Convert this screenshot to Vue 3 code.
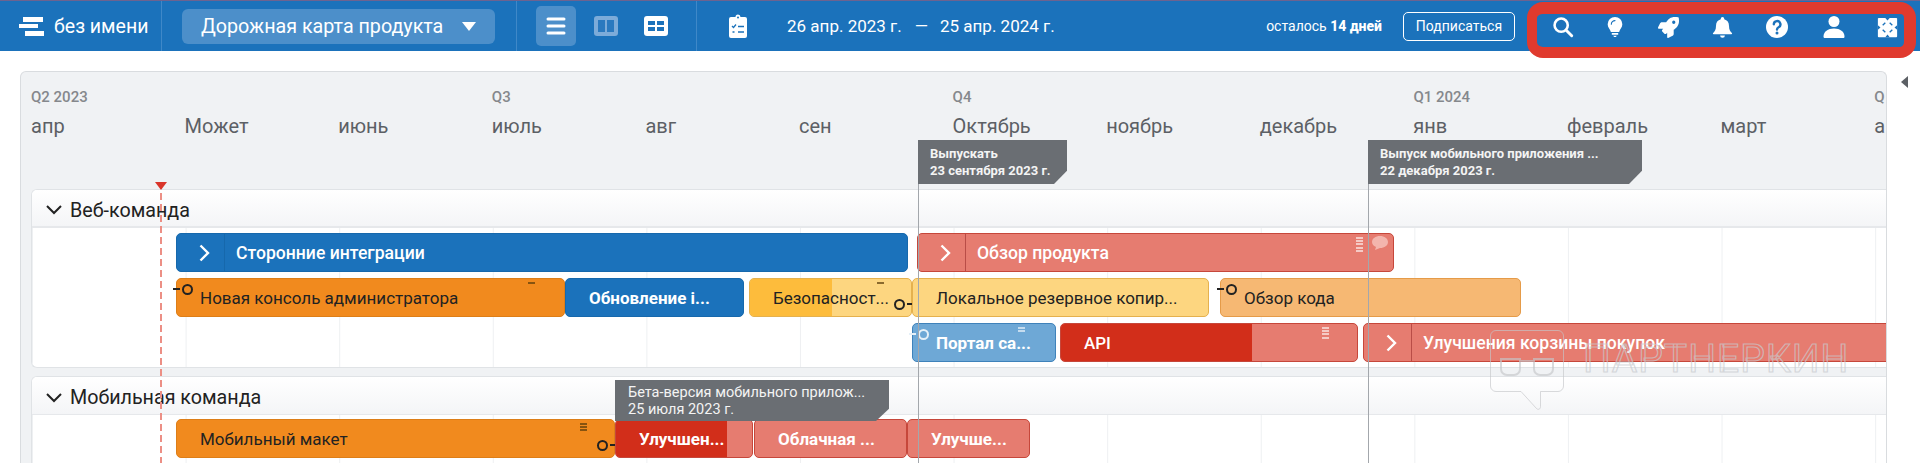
<script setup>
const months = ["апр", "Может", "июнь", "июль", "авг", "сен", "Октябрь", "ноябрь", "декабрь", "янв", "февраль", "март", "а"];
const quarters = ["Q2 2023", "Q3", "Q4", "Q1 2024", "Q"];

// bar positions are in px from the left edge of a lane
const origin = 32;
const bar = (title, kind, from, to, extra = {}) => ({ title, kind, left: from - origin, width: to - from, ...extra });

const webRows = [
  [
    bar("Сторонние интеграции", "blue", 176, 908, { parent: true }),
    bar("Обзор продукта", "salmon", 917, 1394, { parent: true, grip: { x: 438, lines: 5 }, comment: true }),
  ],
  [
    bar("Новая консоль администратора", "orange", 176, 565, { link: "start", grip: { x: 351, lines: 1 } }),
    bar("Обновление i...", "blue", 565, 744, { bold: true }),
    bar("Безопасност...", "yellow", 749, 912, { fill: 82, link: "end", grip: { x: 127, lines: 1 } }),
    bar("Локальное резервное копир...", "yellow", 912, 1209),
    bar("Обзор кода", "peach", 1220, 1521, { link: "start" }),
  ],
  [
    bar("Портал са...", "sky", 912, 1056, { link: "start", grip: { x: 105, lines: 2 }, bold: true }),
    bar("API", "salmon", 1060, 1358, { fill: 191, grip: { x: 261, lines: 4 } }),
    bar("Улучшения корзины покупок", "salmon", 1363, 1950, { parent: true }),
  ],
];

const mobileRows = [
  [
    bar("Мобильный макет", "orange", 176, 615, { link: "end", grip: { x: 403, lines: 3 } }),
    bar("Улучшен...", "salmon", 615, 753, { fill: 111, bold: true }),
    bar("Облачная ...", "salmon", 754, 907, { bold: true }),
    bar("Улучше...", "salmon", 907, 1030, { bold: true }),
  ],
];

const lanes = [
  { name: "Веб-команда", rows: webRows },
  { name: "Мобильная команда", rows: mobileRows },
];

const flags = [
  { title: "Выпускать", date: "23 сентября 2023 г.", left: 897, top: 68, width: 149 },
  { title: "Выпуск мобильного приложения ...", date: "22 декабря 2023 г.", left: 1347, top: 68, width: 274 },
  { title: "Бета-версия мобильного прилож...", date: "25 июля 2023 г.", left: 594, top: 308, width: 274, thin: true },
];

const markers = [897, 1347];
</script>

<template>
  <div class="page">
    <header class="topbar">
      <div class="brand">
        <svg class="logo" viewBox="0 0 25 19" width="25" height="19">
          <path fill="#fff" d="M4 0h20v5H4zM0 7h19v4H0zM6 14h19v5H6z" />
        </svg>
        <span>без имени</span>
      </div>
      <div class="plan">
        <div class="select">
          <span>Дорожная карта продукта</span>
          <i class="caret"></i>
        </div>
      </div>
      <div class="views">
        <button class="view active">
          <svg viewBox="0 0 20 18" width="20" height="18">
            <path stroke="#fff" stroke-width="3" stroke-linecap="round" d="M2 2h16M2 9h16M2 16h16" />
          </svg>
        </button>
        <button class="view">
          <svg viewBox="0 0 24 20" width="24" height="20">
            <rect width="24" height="20" rx="3" fill="#7cabd9" />
            <path fill="#2a79bf" d="M4 4h7v12H4zM13 4h7v12h-7z" />
          </svg>
        </button>
        <button class="view">
          <svg viewBox="0 0 24 20" width="24" height="20">
            <rect width="24" height="20" rx="3" fill="#fff" />
            <path fill="#1b72bb" d="M4 5h7v4H4zM13 5h7v4h-7zM4 11h7v4H4zM13 11h7v4h-7z" />
          </svg>
        </button>
      </div>
      <div class="dates">
        <svg class="clip" viewBox="0 0 18 24" width="18" height="24">
          <path fill="#fff" d="M2 3h4.500a2.500 2.500 0 0 1 5 0H16a2 2 0 0 1 2 2v17a2 2 0 0 1-2 2H2a2 2 0 0 1-2-2V5a2 2 0 0 1 2-2z" />
          <circle cx="9" cy="3.500" r="1" fill="#1b72bb" />
          <path fill="none" stroke="#1b72bb" stroke-width="1.300" d="M3 12l1.500 1.500L7 10.500M9 12.500h6M3.500 18h2M9 18h6" />
        </svg>
        <span class="from">26 апр. 2023 г.</span>
        <span class="dash">—</span>
        <span>25 апр. 2024 г.</span>
      </div>
      <div class="trial">осталось <b>14 дней</b></div>
      <button class="subscribe">Подписаться</button>
      <nav class="tools">
        <svg viewBox="0 0 24 24" width="22" height="22">
          <circle cx="10" cy="10" r="7.200" fill="none" stroke="#fff" stroke-width="2.800" />
          <path stroke="#fff" stroke-width="3.200" stroke-linecap="round" d="M15.500 15.500L21.500 21.500" />
        </svg>
        <svg viewBox="0 0 24 24" width="22" height="24">
          <path fill="#fff" d="M12 1a8 8 0 0 0-8 8c0 3.500 2.700 5.300 3.500 8.500h9C17.300 14.300 20 12.500 20 9a8 8 0 0 0-8-8z" />
          <path fill="#fff" d="M8.500 18.500h7v2h-7zM10 21.500h4l-1 1.500h-2z" />
          <path fill="none" stroke="#1b72bb" stroke-width="1.200" stroke-linecap="round" d="M8 9a4 4 0 0 1 4-4" />
        </svg>
        <svg viewBox="0 0 512 512" width="21" height="21">
          <path fill="#fff" fill-rule="evenodd" d="M505 19c-1-5.500-6.600-11-12-12C460.700 0 435.500 0 410.400 0 307 0 245 55 199 128H94.600c-16.300 0-35.600 12-42.900 26.500L2.600 252.700A28 28 0 0 0 0 263.400c0 13.300 10.800 24 24 24h103.300l-22.400 22.400c-11.300 11.300-13 32.200 0 45.200l50.900 50.900c11.200 11.200 32 13.200 45.300 0l22.400-22.400V487c0 13.300 10.800 24 24 24a28 28 0 0 0 10.700-2.600l98.100-49.100c14.600-7.300 26.500-26.600 26.500-42.900V312.900C447.700 266.600 512 205 512 102c.1-25 .1-50.400-7-83zM384 168a40 40 0 1 1 0-80 40 40 0 0 1 0 80z" />
        </svg>
        <svg viewBox="0 0 24 24" width="23" height="24">
          <path fill="#fff" d="M12 1.500a1.800 1.800 0 0 0-1.800 1.800v.6C7 4.700 5.200 7.300 5.200 11c0 4-1.200 5.500-3 7.300-.5.500-.2 1.200.5 1.200h18.600c.7 0 1-.7.500-1.200-1.800-1.800-3-3.300-3-7.300 0-3.700-1.800-6.300-5-7.100v-.6A1.800 1.800 0 0 0 12 1.500z" />
          <path fill="#fff" d="M9.500 20.800h5a2.500 2.500 0 0 1-5 0z" />
        </svg>
        <svg viewBox="0 0 24 24" width="24" height="24">
          <circle cx="12" cy="12" r="11" fill="#fff" />
          <path fill="none" stroke="#1b72bb" stroke-width="2.400" stroke-linecap="round" d="M8.800 9.300a3.300 3.300 0 1 1 4.800 3c-1.100.6-1.600 1.200-1.600 2.200" />
          <circle cx="12" cy="18" r="1.500" fill="#1b72bb" />
        </svg>
        <svg viewBox="0 0 24 24" width="24" height="24">
          <circle cx="12" cy="6.500" r="5.500" fill="#fff" />
          <path fill="#fff" d="M3 23c-1 0-1.500-.5-1.500-1.500C1.500 16.500 6 13.500 12 13.500s10.500 3 10.500 8c0 1-.5 1.500-1.500 1.500z" />
        </svg>
        <svg viewBox="0 0 24 24" width="21" height="21">
          <rect x="1" y="1" width="22" height="22" rx="1" fill="#fff" />
          <path fill="#1b72bb" d="M9.500 1h5L12 4zM9.500 23h5L12 20zM1 9.500v5L4 12zM23 9.500v5L20 12z" />
          <path stroke="#1b72bb" stroke-width="1.500" d="M6.500 9.500l3-3M14.500 6.500l3 3M6.500 14.500l3 3M14.500 17.500l3-3" />
        </svg>
      </nav>
    </header>

    <main class="stage">
      <section class="roadmap">
        <div class="quarters">
          <span v-for="q in quarters" :key="q">{{ q }}</span>
        </div>
        <div class="months">
          <span v-for="m in months" :key="m">{{ m }}</span>
        </div>

        <div class="lanes">
          <article v-for="lane in lanes" :key="lane.name" class="lane">
            <h2 class="lane-head">
              <svg viewBox="0 0 16 10" width="16" height="10">
                <path fill="none" stroke="#222" stroke-width="2" d="M1 1l7 7 7-7" />
              </svg>
              {{ lane.name }}
            </h2>
            <div class="lane-body">
              <div v-for="(row, i) in lane.rows" :key="i" class="row">
                <div
                  v-for="item in row"
                  :key="item.title"
                  class="bar"
                  :class="[item.kind, { bold: item.bold }]"
                  :style="{ left: item.left + 'px', width: item.width + 'px' }"
                >
                  <i v-if="item.fill" class="fill" :style="{ width: item.fill + 'px' }"></i>
                  <span v-if="item.parent" class="toggle">
                    <svg viewBox="0 0 11 18" width="11" height="18">
                      <path fill="none" stroke="#fff" stroke-width="2.400" d="M1.500 1.500L9 9l-7.500 7.500" />
                    </svg>
                  </span>
                  <span class="label" :class="{ nested: item.parent }">{{ item.title }}</span>
                  <i
                    v-if="item.grip"
                    class="grip"
                    :style="{ left: item.grip.x + 'px', height: item.grip.lines * 3.200 + 'px' }"
                  ></i>
                  <svg v-if="item.comment" class="note" viewBox="0 0 16 14" width="16" height="14">
                    <path fill="#f3b5ad" d="M8 0c4.400 0 8 2.500 8 6s-3.600 6-8 6l-5 2 1-3C1.500 10 0 8.200 0 6c0-3.500 3.600-6 8-6z" />
                  </svg>
                  <i v-if="item.link" class="link" :class="item.link"></i>
                </div>
              </div>
            </div>
          </article>
        </div>

        <i v-for="x in markers" :key="x" class="marker" :style="{ left: x + 'px' }"></i>
        <i class="today"></i>
        <div
          v-for="f in flags"
          :key="f.title"
          class="flag"
          :class="{ thin: f.thin }"
          :style="{ left: f.left + 'px', top: f.top + 'px', width: f.width + 'px' }"
        >
          <div>{{ f.title }}</div>
          <div>{{ f.date }}</div>
        </div>
      </section>
      <i class="collapse"></i>
    </main>

    <div class="watermark">
      <svg viewBox="0 0 74 80" width="74" height="80">
        <path fill="none" stroke="#c4c6ca" stroke-opacity=".65" d="M6 .5h62a5.500 5.500 0 0 1 5.500 5.500v50a5.500 5.500 0 0 1-5.500 5.500H50.500v15c0 3-2.500 3.500-4 2L31 61.500H6A5.500 5.500 0 0 1 .5 56V6A5.500 5.500 0 0 1 6 .5z" />
        <path fill="none" stroke="#c4c6ca" stroke-opacity=".65" stroke-width="2" d="M11 29h19v10a6 6 0 0 1-6 6h-7a6 6 0 0 1-6-6zM44 29h19v10a6 6 0 0 1-6 6h-7a6 6 0 0 1-6-6zM30 31h14" />
      </svg>
      <span>ПАРТНЕРКИН</span>
    </div>
  </div>
</template>

<style>
html,
body {
  margin: 0;
  height: 463px;
  overflow: hidden;
  background: #fff;
}
</style>

<style scoped>
.page {
  position: relative;
  width: 1920px;
  height: 463px;
  overflow: hidden;
  font-family: Roboto, "Noto Sans", sans-serif;
}

.topbar {
  display: flex;
  align-items: center;
  height: 50px;
  border-top: 1px solid #6d6390;
  background: #1b72bb;
  color: #fff;
}

.brand {
  display: flex;
  align-items: center;
  gap: 10px;
  box-sizing: border-box;
  width: 162px;
  height: 100%;
  padding-left: 19px;
  border-right: 1px solid #3f88c8;
  font-size: 19.5px;
}

.plan {
  box-sizing: border-box;
  width: 355px;
  height: 100%;
  padding: 8px 0 0 20px;
  border-right: 1px solid #3f88c8;
}

.select {
  display: flex;
  align-items: center;
  justify-content: space-between;
  box-sizing: border-box;
  width: 313px;
  height: 35px;
  padding: 0 19px;
  border-radius: 6px;
  background: #4c8fca;
  font-size: 19.7px;
}

.caret {
  width: 0;
  height: 0;
  border-left: 7px solid transparent;
  border-right: 7px solid transparent;
  border-top: 9px solid #fff;
}

.views {
  display: flex;
  align-items: center;
  gap: 10px;
  box-sizing: border-box;
  width: 180px;
  height: 100%;
  padding-left: 19px;
  border-right: 1px solid #3f88c8;
}

.view {
  display: flex;
  align-items: center;
  justify-content: center;
  width: 40px;
  height: 40px;
  padding: 0;
  border: 0;
  border-radius: 5px;
  background: none;
}

.view.active {
  background: #4c8fca;
}

.dates {
  display: flex;
  align-items: center;
  flex: 1;
  padding-left: 32px;
  font-size: 17px;
}

.clip {
  margin-right: 40px;
}

.dash {
  margin: 0 12px 0 13px;
}

.trial {
  margin-right: 21px;
  font-size: 14px;
}

.trial b {
  font-weight: 800;
}

.subscribe {
  box-sizing: border-box;
  width: 112px;
  height: 29px;
  margin-right: 12px;
  padding: 0;
  border: 1px solid #fff;
  border-radius: 5px;
  background: none;
  color: #fff;
  font: 14px Roboto, sans-serif;
}

.tools {
  display: grid;
  grid-template-columns: 52px 52px 54px 54px 56px 58px 48px;
  align-items: center;
  justify-items: center;
  box-sizing: border-box;
  flex: none;
  align-self: flex-start;
  width: 389px;
  height: 56px;
  margin: 1px 4px 0 0;
  padding: 0 0 7px 0;
  border: 10px solid #e03a2e;
  border-width: 12px 12px 11px 10px;
  border-radius: 16px;
}

.stage {
  display: flex;
  padding: 20px 0 0 20px;
}

.roadmap {
  position: relative;
  box-sizing: border-box;
  flex: none;
  width: 1867px;
  height: 400px;
  overflow: hidden;
  border: 1px solid #d9dcdf;
  border-bottom: 0;
  border-radius: 6px 6px 0 0;
  background: #f0f2f4;
}

.quarters {
  display: grid;
  grid-template-columns: repeat(5, 460.8px);
  margin: 16px 0 0 10px;
  color: #85888c;
  font-size: 15px;
  font-weight: 500;
  line-height: 18px;
}

.months {
  display: grid;
  grid-template-columns: repeat(13, 153.6px);
  margin: 8px 0 0 10px;
  color: #5c6065;
  font-size: 20px;
  line-height: 24px;
}

.lanes {
  margin: 51px 0 0 10px;
}

.lane {
  margin-bottom: 8px;
  overflow: hidden;
  border: 1px solid #e0e3e6;
  border-right: 0;
  border-radius: 6px 0 0 6px;
  background: #fff;
}

.lane-head {
  display: flex;
  align-items: center;
  gap: 8px;
  box-sizing: border-box;
  height: 38px;
  margin: 0;
  padding: 4px 0 0 14px;
  border-bottom: 2px solid #e6e8eb;
  background: linear-gradient(#fff, #f4f5f7);
  color: #222;
  font-size: 19.7px;
  font-weight: 400;
}

.lane:last-child .lane-head {
  border-bottom-width: 1px;
}

.lane-body {
  min-height: 134px;
  padding-top: 5px;
  background: linear-gradient(90deg, #eef0f2 1px, transparent 1px) 153.6px 0 / 153.6px 100%;
}

.lane:last-child .lane-body {
  padding-top: 4px;
}

.row {
  position: relative;
  height: 39px;
  margin-bottom: 6px;
}

.bar {
  position: absolute;
  top: 0;
  display: flex;
  align-items: center;
  box-sizing: border-box;
  height: 39px;
  border: 1px solid;
  border-radius: 5px;
  color: #fff;
  font-size: 17px;
  font-weight: 500;
}

.bar.bold {
  font-weight: 700;
}

.blue {
  background: #1b72bb;
  border-color: #1668ac;
}

.salmon {
  background: #e67c70;
  border-color: #c6473b;
}

.orange {
  background: #f18a1e;
  border-color: #dd7e18;
  color: #222;
  font-weight: 400;
}

.yellow {
  background: #fdd680;
  border-color: #e5b14e;
  color: #222;
  font-weight: 400;
}

.peach {
  background: #f6b873;
  border-color: #e59b49;
  color: #222;
  font-weight: 400;
}

.sky {
  background: #6ea8d6;
  border-color: #3f82ba;
}

.fill {
  position: absolute;
  top: 0;
  bottom: 0;
  left: 0;
  border-radius: 4px 0 0 4px;
}

.salmon .fill {
  background: #d22e1a;
}

.yellow .fill {
  background: #fdbc3c;
}

.toggle {
  display: flex;
  align-items: center;
  justify-content: center;
  box-sizing: border-box;
  flex: none;
  width: 48px;
  height: 100%;
  padding-left: 8px;
  border-right: 1px solid rgba(140, 30, 30, 0.5);
}

.blue .toggle {
  border-right-color: #1668ac;
}

.label {
  position: relative;
  padding-left: 23px;
  white-space: nowrap;
}

.label.nested {
  padding-left: 11px;
  font-size: 17.6px;
}

.grip {
  position: absolute;
  top: 3px;
  width: 7px;
  background: repeating-linear-gradient(rgba(255, 255, 255, 0.6) 0 2px, transparent 2px 3.2px);
}

.orange .grip,
.yellow .grip {
  background: repeating-linear-gradient(rgba(90, 60, 10, 0.7) 0 2px, transparent 2px 3.2px);
}

.note {
  position: absolute;
  top: 2px;
  right: 5px;
}

.link {
  position: absolute;
  width: 7px;
  height: 7px;
  border: 2.5px solid #222;
  border-radius: 50%;
}

.link::before {
  content: "";
  position: absolute;
  top: 2px;
  width: 7px;
  height: 2px;
  background: #222;
}

.link.start {
  top: 5px;
  left: 5px;
}

.link.start::before {
  left: -11px;
}

.link.end {
  right: 6px;
  bottom: 6px;
}

.link.end::before {
  right: -11px;
}

.sky .link {
  border-color: #e5f0f8;
}

.sky .link::before {
  background: #e5f0f8;
}

.marker {
  position: absolute;
  top: 68px;
  bottom: 0;
  width: 1px;
  background: #a3a7ac;
}

.today {
  position: absolute;
  top: 110px;
  bottom: 0;
  left: 139px;
  width: 2px;
  background: repeating-linear-gradient(#ec8f85 0 7px, transparent 7px 11px);
}

.today::before {
  content: "";
  position: absolute;
  top: 0;
  left: -5px;
  border-left: 6px solid transparent;
  border-right: 6px solid transparent;
  border-top: 8px solid #d9352a;
}

.flag {
  position: absolute;
  box-sizing: border-box;
  height: 44px;
  padding: 5px 12px 0;
  background: #6a6e73;
  color: #f4f4f4;
  font-size: 13px;
  font-weight: 700;
  line-height: 17px;
  clip-path: polygon(0 0, 100% 0, 100% 70%, calc(100% - 13px) 100%, 0 100%);
}

.flag.thin {
  height: 41px;
  padding: 4px 13px 0;
  font-size: 14.5px;
  font-weight: 400;
}

.collapse {
  width: 0;
  height: 0;
  margin: 5px 0 0 14px;
  border-top: 6px solid transparent;
  border-bottom: 6px solid transparent;
  border-right: 7px solid #5c6065;
}

.watermark {
  position: absolute;
  top: 330px;
  left: 1490px;
  display: flex;
  align-items: flex-start;
  gap: 19px;
  pointer-events: none;
}

.watermark span {
  margin-top: 6px;
  color: transparent;
  font-size: 39px;
  line-height: 46px;
  letter-spacing: 1px;
  white-space: nowrap;
  -webkit-text-stroke: 1.2px rgba(200, 202, 206, 0.7);
}
</style>
